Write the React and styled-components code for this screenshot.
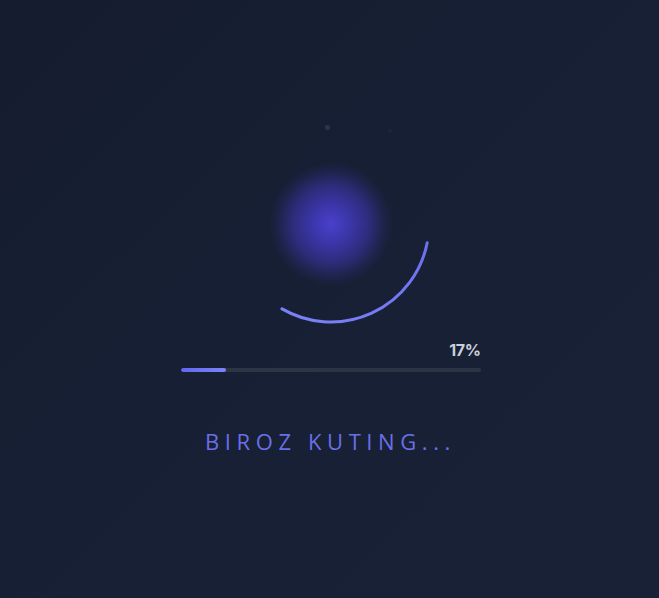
import React from 'react';
import styled, { createGlobalStyle } from 'styled-components';

const GlobalStyle = createGlobalStyle`
  html, body {
    margin: 0;
    padding: 0;
    height: 100%;
  }
  body {
    background: linear-gradient(135deg, #151c2f 0%, #172035 55%, #192137 100%);
    font-family: 'Open Sans', 'Liberation Sans', sans-serif;
  }
  #root {
    min-height: 100vh;
  }
`;

const Stage = styled.div`
  min-height: 100vh;
  display: flex;
  flex-direction: column;
  align-items: center;
  padding-top: 124px;
  padding-left: 2px;
  box-sizing: border-box;
`;

const Spinner = styled.div`
  position: relative;
  width: 200px;
  height: 200px;
`;

const Glow = styled.div`
  position: absolute;
  left: 38px;
  top: 38px;
  width: 124px;
  height: 124px;
  border-radius: 50%;
  background: radial-gradient(
    circle closest-side,
    #4a40cc 0%,
    rgba(66, 58, 190, 0.85) 30%,
    rgba(58, 52, 165, 0.62) 62%,
    rgba(45, 45, 125, 0.3) 85%,
    rgba(30, 36, 70, 0) 100%
  );
`;

const Particle = styled.span`
  position: absolute;
  left: ${(p) => p.x}px;
  top: ${(p) => p.y}px;
  width: ${(p) => p.size}px;
  height: ${(p) => p.size}px;
  border-radius: 50%;
  background: ${(p) => p.color};
`;

const Ring = styled.svg`
  position: absolute;
  inset: 0;
  overflow: visible;
`;

const Progress = styled.div`
  width: 300px;
  margin-top: 16px;
  display: flex;
  flex-direction: column;
  gap: 8px;
`;

const Percent = styled.div`
  align-self: flex-end;
  font-family: Inter, 'Liberation Sans', sans-serif;
  font-size: 16px;
  font-weight: 700;
  line-height: 20px;
  letter-spacing: -0.4px;
  color: #cbcfd8;
`;

const Track = styled.div`
  height: 4px;
  border-radius: 2px;
  background: #2d3446;
  overflow: hidden;
`;

const Fill = styled.div`
  height: 100%;
  width: ${(p) => p.value}px;
  border-radius: 2px;
  background: linear-gradient(90deg, #6366f1, #7c84f6);
`;

const Caption = styled.div`
  margin-top: 54px;
  font-size: 22px;
  line-height: 30px;
  letter-spacing: 5.6px;
  color: #6a6fe8;
`;

const polar = (a, r = 98) => {
  const rad = (a * Math.PI) / 180;
  return [100 + r * Math.cos(rad), 100 + r * Math.sin(rad)];
};

export default function App() {
  const [sx, sy] = polar(11);
  const [ex, ey] = polar(120);
  return (
    <>
      <GlobalStyle />
      <Stage>
        <Spinner>
          <Particle x={94} y={1} size={5} color="#2c3354" />
          <Particle x={157} y={5} size={4} color="#1e2640" />
          <Glow />
          <Ring width="200" height="200" viewBox="0 0 200 200">
            <defs>
              <linearGradient id="arc" x1="1" y1="0" x2="0" y2="1">
                <stop offset="0%" stopColor="#6c70ee" />
                <stop offset="100%" stopColor="#7c82f6" />
              </linearGradient>
            </defs>
            <path
              d={`M ${sx} ${sy} A 98 98 0 0 1 ${ex} ${ey}`}
              fill="none"
              stroke="url(#arc)"
              strokeWidth="3"
              strokeLinecap="round"
            />
          </Ring>
        </Spinner>
        <Progress>
          <Percent>17%</Percent>
          <Track>
            <Fill value={45} />
          </Track>
        </Progress>
        <Caption>BIROZ KUTING...</Caption>
      </Stage>
    </>
  );
}
